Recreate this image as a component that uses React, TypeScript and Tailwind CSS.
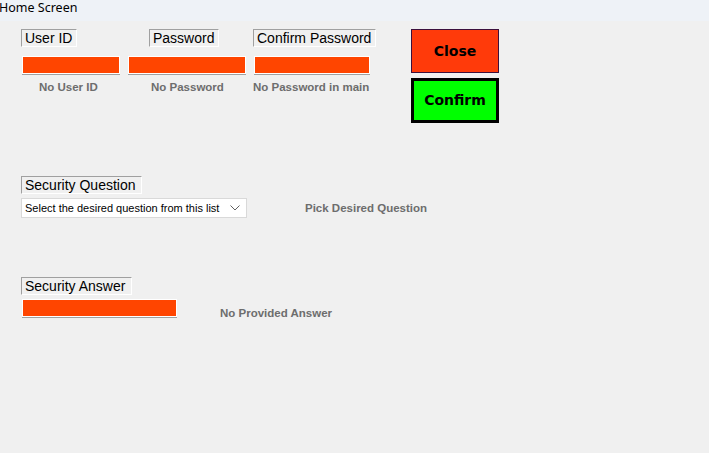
import React from "react";

const Label3D = ({ text, w }: { text: string; w: string }) => (
  <div
    className={`${w} h-[18px] border border-t-[#a0a0a0] border-l-[#a0a0a0] border-b-white border-r-white text-[14px] leading-[16px] pl-[3px] text-black whitespace-nowrap overflow-hidden`}
    style={{ fontFamily: '"Liberation Sans", Arial, sans-serif' }}
  >
    {text}
  </div>
);

const OrangeBox = ({ w }: { w: string }) => (
  <div className={`${w} h-[19px] border-b border-[#a0a0a0]`}>
    <div className="h-[18px] border border-white bg-[#ff4500]" />
  </div>
);

const Caption = ({ text, cls = "" }: { text: string; cls?: string }) => (
  <div
    className={`text-[11.5px] font-bold text-[#6d6d6d] whitespace-nowrap ${cls}`}
    style={{ fontFamily: '"Liberation Sans", Arial, sans-serif' }}
  >
    {text}
  </div>
);

export default function App() {
  return (
    <div className="w-[709px] h-[453px] bg-[#f0f0f0] flex flex-col overflow-hidden">
      <div
        className="h-[21px] bg-[#eef2f7] text-[12.5px] leading-[15px] text-black pl-0 -ml-[1px]"
        style={{ fontFamily: '"Noto Sans", "Open Sans", sans-serif' }}
      >
        Home Screen
      </div>

      {/* top row */}
      <div className="flex pt-[8px] pl-[21px]">
        <div className="flex flex-col w-[100px]">
          <Label3D text="User ID" w="w-[56px]" />
          <div className="ml-[1px] mt-[9px]">
            <OrangeBox w="w-[98px]" />
          </div>
          <Caption text="No User ID" cls="ml-[18px] mt-[4px]" />
        </div>
        <div className="flex flex-col w-[125px] ml-[7px]">
          <Label3D text="Password" w="w-[70px] ml-[21px]" />
          <div className="mt-[9px]">
            <OrangeBox w="w-[118px]" />
          </div>
          <Caption text="No Password" cls="ml-[23px] mt-[4px]" />
        </div>
        <div className="flex flex-col w-[125px]">
          <Label3D text="Confirm Password" w="w-[123px]" />
          <div className="ml-[1px] mt-[9px]">
            <OrangeBox w="w-[116px]" />
          </div>
          <Caption text="No Password in main" cls="mt-[4px]" />
        </div>
        <div className="flex flex-col ml-[33px]">
          <button
            className="w-[88px] h-[44px] bg-[#ff3a0a] border border-[#3c0f3c] text-[14px] font-bold text-black flex items-center justify-center"
            style={{ fontFamily: '"Comic Sans MS", "DejaVu Sans", cursive' }}
          >
            Close
          </button>
          <button
            className="w-[88px] h-[45px] mt-[5px] bg-[#00ff00] border-[3px] border-black text-[14px] font-bold text-black flex items-center justify-center"
            style={{ fontFamily: '"Comic Sans MS", "DejaVu Sans", cursive' }}
          >
            Confirm
          </button>
        </div>
      </div>

      {/* security question */}
      <div className="flex flex-col pl-[21px] mt-[53px]">
        <Label3D text="Security Question" w="w-[121px]" />
        <div className="flex items-center mt-[4px]">
          <div
            className="w-[226px] h-[20px] bg-white border border-[#d9d9d9] flex items-center justify-between pl-[3px] pr-[6px] text-[11px] text-black"
            style={{ fontFamily: '"Liberation Sans", Arial, sans-serif' }}
          >
            <span className="whitespace-nowrap">Select the desired question from this list</span>
            <svg width="10" height="6" viewBox="0 0 10 6" fill="none">
              <path d="M0.5 0.5 L5 5 L9.5 0.5" stroke="#606060" strokeWidth="1" />
            </svg>
          </div>
          <Caption text="Pick Desired Question" cls="ml-[58px] mt-[2px]" />
        </div>
      </div>

      {/* security answer */}
      <div className="flex flex-col pl-[21px] mt-[59px]">
        <Label3D text="Security Answer" w="w-[111px]" />
        <div className="flex items-end mt-[4px]">
          <div className="ml-[1px]">
            <OrangeBox w="w-[155px]" />
          </div>
          <Caption text="No Provided Answer" cls="ml-[43px] -mb-[4px]" />
        </div>
      </div>
    </div>
  );
}
